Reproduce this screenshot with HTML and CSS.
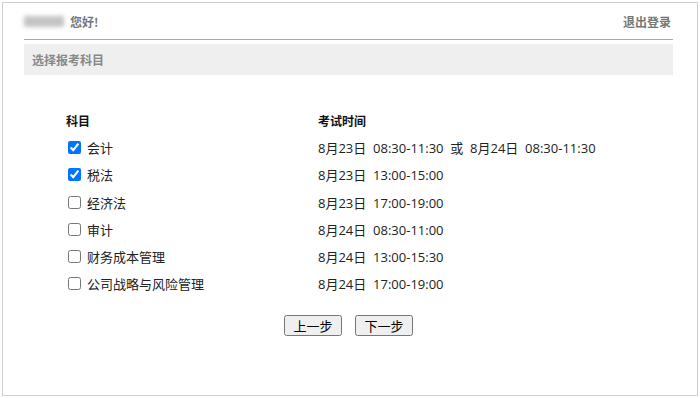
FILE: index.html
```html
<!DOCTYPE html>
<html lang="zh">
<head>
<meta charset="utf-8">
<link rel="stylesheet" href="styles.css">
</head>
<body>
<div class="frame">
  <div class="topbar">
    <div class="greet"><span class="blurname"></span><span>您好!</span></div>
    <a class="logout">退出登录</a>
  </div>
  <div class="section">选择报考科目</div>
  <div class="table">
    <div class="th">科目</div>
    <div class="th">考试时间</div>
    <label class="subj"><input type="checkbox" checked><span>会计</span></label>
    <div class="time">8月23日&nbsp;&nbsp;08:30-11:30&nbsp;&nbsp;或&nbsp;&nbsp;8月24日&nbsp;&nbsp;08:30-11:30</div>
    <label class="subj"><input type="checkbox" checked><span>税法</span></label>
    <div class="time">8月23日&nbsp;&nbsp;13:00-15:00</div>
    <label class="subj"><input type="checkbox"><span>经济法</span></label>
    <div class="time">8月23日&nbsp;&nbsp;17:00-19:00</div>
    <label class="subj"><input type="checkbox"><span>审计</span></label>
    <div class="time">8月24日&nbsp;&nbsp;08:30-11:00</div>
    <label class="subj"><input type="checkbox"><span>财务成本管理</span></label>
    <div class="time">8月24日&nbsp;&nbsp;13:00-15:30</div>
    <label class="subj"><input type="checkbox"><span>公司战略与风险管理</span></label>
    <div class="time">8月24日&nbsp;&nbsp;17:00-19:00</div>
  </div>
  <div class="actions">
    <button class="btn">上一步</button>
    <button class="btn">下一步</button>
  </div>
</div>
</body>
</html>
```

FILE: styles.css
```css
html, body { margin: 0; padding: 0; background: #fff; }
body {
  font-family: "Open Sans", "Noto Sans CJK SC", sans-serif;
  font-size: 13px;
  color: #222;
}
.frame {
  margin: 2px;
  border: 1px solid #cfcfcf;
  padding: 0 24px 0 21px;
  box-sizing: border-box;
  width: 696px;
  height: 394px;
}
.topbar {
  height: 36px;
  border-bottom: 1px solid #a9a9a9;
  display: flex;
  align-items: center;
  justify-content: space-between;
  font-family: "Noto Sans CJK SC", sans-serif;
  font-weight: bold;
  font-size: 12px;
  color: #777;
}
.greet { display: flex; align-items: center; gap: 6px; }
.blurname {
  display: inline-block;
  width: 40px;
  height: 11px;
  background: #c4c4c4;
  filter: blur(2px);
}
.logout { color: #777; margin-right: 2px; }
.section {
  margin-top: 4px;
  height: 31px;
  background: #efefef;
  display: flex;
  align-items: center;
  padding-left: 8px;
  font-family: "Noto Sans CJK SC", sans-serif;
  font-weight: bold;
  font-size: 12px;
  color: #888;
}
.table {
  margin-top: 32px;
  padding-left: 42px;
  display: grid;
  grid-template-columns: 252px auto;
  grid-auto-rows: 27.2px;
  align-items: center;
}
.th {
  font-family: "Noto Sans CJK SC", sans-serif;
  font-weight: bold;
  font-size: 12px;
  color: #111;
}
.subj { display: flex; align-items: center; font-family: "Noto Sans CJK SC", sans-serif; }
.subj input { margin: 0 6px 0 2px; width: 13px; height: 13px; }
.time { font-family: "Open Sans", "Noto Sans CJK SC", sans-serif; }
.actions {
  display: flex;
  justify-content: center;
  gap: 13px;
  margin-top: 18px;
}
.btn {
  width: 58px;
  height: 21px;
  padding: 0;
  font-family: "Noto Sans CJK SC", sans-serif;
  font-size: 13px;
  line-height: 1;
}
```
